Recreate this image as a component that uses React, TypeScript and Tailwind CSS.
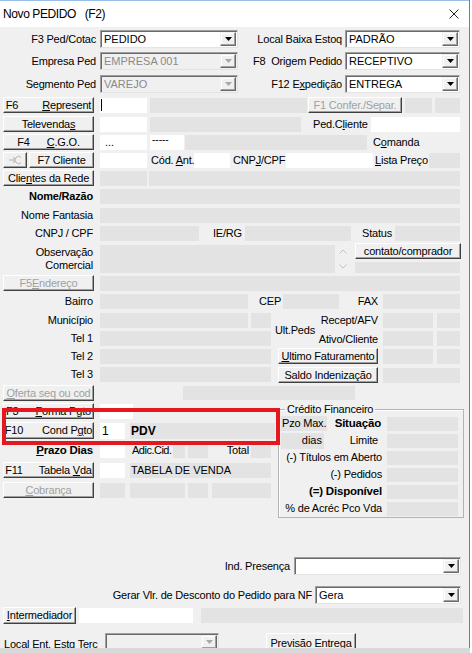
import type { ReactNode } from 'react';
import { clsx as cn } from 'clsx';

type P = { c?: string; children?: ReactNode };

function U({ children }: { children: ReactNode }) {
  return <span className="underline underline-offset-[1px] decoration-1">{children}</span>;
}

function Lbl({ c, children }: P) {
  return <div className={cn('shrink-0 whitespace-nowrap', c)}>{children}</div>;
}

function Fld({ c, white, children }: P & { white?: boolean }) {
  return (
    <div
      className={cn(
        'shrink-0 h-[15px] flex items-center overflow-hidden whitespace-nowrap tracking-normal',
        white ? 'bg-white' : 'bg-[#e3e3e3]',
        c
      )}
    >
      {children}
    </div>
  );
}

function Btn({ c, dis, children }: P & { dis?: boolean }) {
  return (
    <div
      className={cn(
        'shrink-0 h-[16px] flex items-center justify-center whitespace-nowrap bg-[#f0f0f0] border border-t-white border-l-white border-r-[#404040] border-b-[#404040] shadow-[inset_-1px_-1px_0_#a0a0a0]',
        dis ? 'text-[#a0a0a0]' : 'text-black',
        c
      )}
    >
      {children}
    </div>
  );
}

function Combo({ c, v, dis }: { c?: string; v?: string; dis?: boolean }) {
  return (
    <div
      className={cn(
        'shrink-0 h-[18px] flex border border-t-[#a0a0a0] border-l-[#a0a0a0] border-r-[#e3e3e3] border-b-[#e3e3e3] shadow-[inset_1px_1px_0_#696969]',
        dis ? 'bg-[#f0f0f0] text-[#8a8a8a]' : 'bg-white text-black',
        c
      )}
    >
      <div className="flex-1 pl-[3px] pt-[1px] flex items-center whitespace-nowrap overflow-hidden tracking-normal">{v}</div>
      <div className="w-[16px] h-[14px] mt-[1px] mr-[1px] flex items-center justify-center bg-[#f0f0f0] border border-t-[#f0f0f0] border-l-[#f0f0f0] border-r-[#696969] border-b-[#696969] shadow-[inset_-1px_-1px_0_#a0a0a0,inset_1px_1px_0_#fff]">
        <svg width="7" height="4" viewBox="0 0 7 4">
          <path d="M0 0h7L3.5 4z" fill={dis ? '#a8a8a8' : '#000'} />
        </svg>
      </div>
    </div>
  );
}

export default function App() {
  return (
    <div className="w-[472px] h-[653px] bg-white overflow-hidden font-['Liberation_Sans',Arial,sans-serif] text-[11px] leading-none tracking-[-0.2px] text-black">
      <div className="relative w-[470px] h-[648px] overflow-hidden bg-[#f0f0f0] border-r border-[#3b8ad6] flex flex-col">
        {/* title bar */}
        <div className="h-[27px] shrink-0 bg-white border-t border-[#9cc1e8] flex items-center">
          <span className="pl-[3px] text-[12px] tracking-[-0.4px] whitespace-pre">Novo PEDIDO   (F2)</span>
          <svg className="ml-auto mr-[10px]" width="10" height="10" viewBox="0 0 10 10">
            <path d="M0.5 0.5l9 9M9.5 0.5l-9 9" stroke="#222" strokeWidth="1" />
          </svg>
        </div>

        <div className="flex items-center h-[18px] mt-[3px] shrink-0">
          <Lbl c="w-[96px] text-right">F3 Ped/Cotac</Lbl>
          <Combo c="ml-[4px] w-[138px]" v="PEDIDO" />
          <Lbl c="w-[104px] text-right">Local Baixa Estoq</Lbl>
          <Combo c="ml-[3px] w-[115px]" v="PADRÃO" />
        </div>
        <div className="flex items-center h-[18px] mt-[4px] shrink-0">
          <Lbl c="w-[96px] text-right">Empresa Ped</Lbl>
          <Combo dis c="ml-[4px] w-[138px]" v="EMPRESA 001" />
          <Lbl c="w-[104px] text-right whitespace-pre">F8  Origem Pedido</Lbl>
          <Combo c="ml-[3px] w-[115px]" v="RECEPTIVO" />
        </div>
        <div className="flex items-center h-[18px] mt-[5px] shrink-0">
          <Lbl c="w-[96px] text-right">Segmento Ped</Lbl>
          <Combo dis c="ml-[4px] w-[138px]" v="VAREJO" />
          <Lbl c="w-[104px] text-right">
            F12 E<U>x</U>pedição
          </Lbl>
          <Combo c="ml-[3px] w-[115px]" v="ENTREGA" />
        </div>

        <div className="flex items-center h-[16px] mt-[4px] shrink-0">
          <Btn c="ml-[3px] w-[91px] gap-[24px]">
            <span>F6</span>
            <span>
              <U>R</U>epresent
            </span>
          </Btn>
          <Fld white c="ml-[6px] w-[47px]">
            <div className="ml-[1px] w-px h-[12px] bg-black" />
          </Fld>
          <Fld c="ml-[3px] w-[157px]" />
          <Btn dis c="ml-[1px] w-[94px]">F1 Confer./Separ.</Btn>
          <Fld c="ml-[3px] w-[27px]" />
          <Fld c="ml-[3px] w-[25px]" />
        </div>

        <div className="flex items-center h-[16px] mt-[3px] shrink-0">
          <Btn c="ml-[3px] w-[91px]">
            Televenda<U>s</U>
          </Btn>
          <Fld white c="ml-[6px] w-[47px]" />
          <Fld c="ml-[3px] w-[151px]" />
          <Lbl c="ml-[12px] w-[55px]">
            Ped.C<U>l</U>iente
          </Lbl>
          <Fld white c="ml-[3px] w-[89px]" />
        </div>

        <div className="flex items-center h-[16px] mt-[2px] shrink-0">
          <Btn c="ml-[3px] w-[91px] gap-[17px]">
            <span>F4</span>
            <span>
              <U>C</U>.G.O.
            </span>
          </Btn>
          <Fld white c="ml-[6px] w-[47px] pl-[5px]">...</Fld>
          <Fld white c="ml-[3px] w-[34px] !items-start pl-[2px]">
            <span className="leading-[9px] text-[10px]">-----</span>
          </Fld>
          <Fld c="ml-[1px] w-[182px]" />
          <Lbl c="ml-[6px]">
            C<U>o</U>manda
          </Lbl>
        </div>

        <div className="flex items-center h-[16px] mt-[2px] shrink-0">
          <Btn dis c="ml-[3px] w-[24px]">
            <svg width="15" height="10" viewBox="0 0 15 10" fill="none">
              <path d="M1 5h5M6 2v6" stroke="#b4b4b4" />
              <path d="M13 2.3A3.6 3.6 0 1 0 13 7.7" stroke="#b4b4b4" />
            </svg>
          </Btn>
          <Btn c="ml-[2px] w-[65px]">F7 Cliente</Btn>
          <Fld white c="ml-[6px] w-[47px]" />
          <Lbl c="ml-[4px] w-[43px]">
            Cód. <U>A</U>nt.
          </Lbl>
          <Fld white c="w-[36px]" />
          <Lbl c="ml-[3px] w-[53px]">
            CNP<U>J</U>/CPF
          </Lbl>
          <Fld white c="w-[87px]" />
          <Lbl c="ml-[2px] w-[54px]">
            <U>L</U>ista Preço
          </Lbl>
          <Fld c="w-[31px]" />
        </div>

        <div className="flex items-center h-[16px] mt-[2px] shrink-0">
          <Btn c="ml-[3px] w-[91px]">
            Clie<U>n</U>tes da Rede
          </Btn>
          <Fld c="ml-[6px] w-[47px]" />
          <Fld c="ml-[2px] w-[311px]" />
        </div>

        <div className="flex items-center h-[15px] mt-[3px] shrink-0">
          <Lbl c="w-[93px] text-right font-bold">Nome/Razão</Lbl>
          <Fld c="ml-[7px] w-[360px]" />
        </div>
        <div className="flex items-center h-[15px] mt-[4px] shrink-0">
          <Lbl c="w-[93px] text-right">Nome Fantasia</Lbl>
          <Fld c="ml-[7px] w-[360px]" />
        </div>
        <div className="flex items-center h-[15px] mt-[3px] shrink-0">
          <Lbl c="w-[93px] text-right">CNPJ / CPF</Lbl>
          <Fld c="ml-[7px] w-[99px]" />
          <Lbl c="ml-[14px] w-[31px]">IE/RG</Lbl>
          <Fld c="ml-[1px] w-[106px]" />
          <Lbl c="ml-[11px] w-[32px]">Status</Lbl>
          <Fld c="ml-[1px] w-[65px]" />
        </div>

        <div className="flex items-start h-[28px] mt-[4px] shrink-0">
          <Lbl c="w-[93px] text-right leading-[13px] pt-[1px]">
            Observação
            <br />
            Comercial
          </Lbl>
          <Fld c="ml-[7px] w-[235px] !h-[28px]" />
          <div className="ml-[4px] w-[8px] h-[28px] flex flex-col items-center justify-between py-[4px]">
            <svg width="8" height="5" viewBox="0 0 8 5" fill="none">
              <path d="M0.5 4.5L4 1l3.5 3.5" stroke="#c2c2c2" />
            </svg>
            <svg width="8" height="5" viewBox="0 0 8 5" fill="none">
              <path d="M0.5 0.5L4 4l3.5-3.5" stroke="#c2c2c2" />
            </svg>
          </div>
          <div className="ml-[8px] -mt-[2px] flex flex-col">
            <Btn c="w-[106px]">contato/comprador</Btn>
            <Fld c="mt-[3px] w-[105px] !h-[11px]" />
          </div>
        </div>

        <div className="flex items-center h-[16px] mt-[2px] shrink-0">
          <Btn dis c="ml-[3px] w-[91px]">
            F5<U>E</U>ndereço
          </Btn>
          <Fld c="ml-[6px] w-[360px]" />
        </div>

        <div className="flex items-center h-[15px] mt-[3px] shrink-0">
          <Lbl c="w-[93px] text-right">Bairro</Lbl>
          <Fld c="ml-[7px] w-[148px]" />
          <Lbl c="ml-[11px] w-[22px]">CEP</Lbl>
          <Fld c="ml-[2px] w-[56px]" />
          <Lbl c="w-[39px] text-right">FAX</Lbl>
          <Fld c="ml-[5px] w-[77px]" />
        </div>

        {/* Município / Tel block with Ult.Peds column */}
        <div className="flex items-start mt-[4px] shrink-0">
          <div className="w-[271px] flex flex-col">
            <div className="flex items-center h-[15px]">
              <Lbl c="w-[93px] text-right">Município</Lbl>
              <Fld c="ml-[7px] w-[148px]" />
              <Fld c="ml-[3px] w-[20px]" />
            </div>
            <div className="flex items-center h-[15px] mt-[3px]">
              <Lbl c="w-[93px] text-right">Tel 1</Lbl>
              <Fld c="ml-[7px] w-[171px]" />
            </div>
            <div className="flex items-center h-[15px] mt-[3px]">
              <Lbl c="w-[93px] text-right">Tel 2</Lbl>
              <Fld c="ml-[7px] w-[171px]" />
            </div>
            <div className="flex items-center h-[15px] mt-[3px]">
              <Lbl c="w-[93px] text-right">Tel 3</Lbl>
              <Fld c="ml-[7px] w-[171px]" />
            </div>
          </div>
          <div className="ml-[4px] flex flex-col">
            <div className="flex h-[33px]">
              <Lbl c="w-[40px] self-center pt-[2px]">Ult.Peds</Lbl>
              <div className="w-[63px] flex flex-col text-right">
                <div className="h-[15px] leading-[14px]">Recept/AFV</div>
                <div className="h-[15px] mt-[3px] leading-[16px]">Ativo/Cliente</div>
              </div>
              <div className="ml-[5px] flex flex-col">
                <div className="flex h-[15px]">
                  <Fld c="w-[50px]" />
                  <Fld c="ml-[4px] w-[23px]" />
                </div>
                <div className="flex h-[15px] mt-[3px]">
                  <Fld c="w-[50px]" />
                  <Fld c="ml-[4px] w-[23px]" />
                </div>
              </div>
            </div>
            <div className="flex items-center h-[16px] mt-[2px]">
              <Btn c="ml-[3px] w-[100px]">
                <U>U</U>ltimo Faturamento
              </Btn>
              <Fld c="ml-[5px] w-[50px]" />
              <Fld c="ml-[4px] w-[23px]" />
            </div>
            <div className="flex items-center h-[16px] mt-[3px]">
              <Btn c="ml-[3px] w-[100px]">Saldo Indenização</Btn>
              <Fld c="ml-[5px] w-[77px]" />
            </div>
          </div>
        </div>

        <div className="flex items-center h-[16px] mt-[2px] shrink-0">
          <Btn dis c="ml-[3px] w-[91px]">
            <U>O</U>ferta seq ou cod
          </Btn>
          <Fld c="ml-[89px] w-[172px] !h-[14px]" />
        </div>

        {/* pagamento + crédito financeiro */}
        <div className="flex items-start mt-[2px] shrink-0">
          <div className="w-[275px] flex flex-col">
            <div className="flex items-center h-[16px]">
              <Btn c="ml-[3px] w-[91px] gap-[17px]">
                <span>F3</span>
                <span>
                  <U>F</U>orma Pgto
                </span>
              </Btn>
              <Fld white c="ml-[6px] w-[33px]" />
            </div>
            <div className="flex items-center h-[17px] mt-[3px]">
              <Btn c="ml-[3px] w-[91px] !h-[17px] gap-[19px]">
                <span>F10</span>
                <span>
                  Cond P<U>g</U>to
                </span>
              </Btn>
              <Fld white c="ml-[6px] w-[25px] !h-[16px] pl-[2px] text-[12px]">
                1
              </Fld>
              <Fld c="ml-[5px] w-[145px] !h-[16px] pl-[1px] text-[12px] font-bold">PDV</Fld>
            </div>
            <div className="flex items-center h-[15px] mt-[4px]">
              <Lbl c="w-[93px] text-right font-bold text-[11.5px]">
                <U>P</U>razo Dias
              </Lbl>
              <Fld white c="ml-[7px] w-[25px]" />
              <Lbl c="ml-[7px] w-[41px] tracking-[-0.5px]">Adic.Cid.</Lbl>
              <Fld c="w-[12px]" />
              <Fld c="ml-[3px] w-[20px]" />
              <Lbl c="w-[41px] text-right">Total</Lbl>
              <Fld c="ml-[2px] w-[20px]" />
            </div>
            <div className="flex items-center h-[16px] mt-[4px]">
              <Btn c="ml-[3px] w-[91px] gap-[16px]">
                <span>F11</span>
                <span>
                  Tabela <U>V</U>da
                </span>
              </Btn>
              <Fld white c="ml-[6px] w-[25px]" />
              <Fld c="ml-[5px] w-[141px] pl-[1px]">TABELA DE VENDA</Fld>
            </div>
            <div className="flex items-center h-[16px] mt-[4px]">
              <Btn dis c="ml-[3px] w-[91px]">
                <U>C</U>obrança
              </Btn>
              <Fld c="ml-[6px] w-[25px]" />
              <Fld c="ml-[5px] w-[55px]" />
              <Fld c="ml-[3px] w-[20px]" />
              <Fld c="ml-[4px] w-[59px]" />
            </div>
          </div>

          <fieldset className="ml-[3px] w-[186px] border border-[#b4b4b4] shadow-[inset_1px_1px_0_#fff] px-[2px] pb-[1px]">
            <legend className="ml-[4px] px-[2px] leading-[12px]">Crédito Financeiro</legend>
            <div className="flex items-center h-[15px] mt-[1px]">
              <Fld c="w-[46px] pl-[1px] !tracking-[-0.2px]">Pzo Max.</Fld>
              <Lbl c="w-[54px] text-right font-bold text-[11.5px]">Situação</Lbl>
              <Fld c="ml-[6px] w-[71px] !h-[14px]" />
            </div>
            <div className="flex items-center h-[15px] mt-[2px]">
              <Fld c="w-[43px] justify-end pr-[2px] !h-[16px]">dias</Fld>
              <Lbl c="w-[54px] text-right">Limite</Lbl>
              <Fld c="ml-[9px] w-[71px] !h-[14px]" />
            </div>
            <div className="flex items-center h-[15px] mt-[2px]">
              <Lbl c="w-[101px] text-right">(-) Títulos em Aberto</Lbl>
              <Fld c="ml-[5px] w-[71px] !h-[14px]" />
            </div>
            <div className="flex items-center h-[15px] mt-[2px]">
              <Lbl c="w-[101px] text-right">(-) Pedidos</Lbl>
              <Fld c="ml-[5px] w-[71px] !h-[14px]" />
            </div>
            <div className="flex items-center h-[15px] mt-[2px]">
              <Lbl c="w-[101px] text-right font-bold text-[11.5px]">(=) Disponível</Lbl>
              <Fld c="ml-[5px] w-[71px] !h-[14px]" />
            </div>
            <div className="flex items-center h-[15px] mt-[2px]">
              <Lbl c="w-[101px] text-right">% de Acréc Pco Vda</Lbl>
              <Fld c="ml-[5px] w-[71px] !h-[14px]" />
            </div>
          </fieldset>
        </div>

        <div className="flex items-center h-[18px] mt-[39px] shrink-0">
          <Lbl c="w-[290px] text-right">Ind. Presença</Lbl>
          <Combo c="ml-[4px] w-[167px]" />
        </div>
        <div className="flex items-center h-[18px] mt-[11px] shrink-0">
          <Lbl c="w-[312px] text-right">Gerar Vlr. de Desconto do Pedido para NF</Lbl>
          <Combo c="ml-[3px] w-[146px]" v="Gera" />
        </div>
        <div className="flex items-center h-[17px] mt-[3px] shrink-0">
          <Btn c="ml-[3px] w-[73px] !h-[17px]">
            <U>I</U>ntermediador
          </Btn>
          <Fld white c="ml-[3px] w-[114px]" />
          <Fld c="ml-[8px] w-[262px]" />
        </div>
        <div className="flex items-start h-[18px] mt-[9px] shrink-0">
          <Lbl c="ml-[4px] w-[97px] pt-[6px]">Local Ent. Estq Terc</Lbl>
          <Combo dis c="ml-[4px] w-[114px]" />
          <Btn c="ml-[47px] w-[90px] !h-[17px] pt-[3px]">Previsão Entrega</Btn>
        </div>

        {/* annotation box */}
        <div className="absolute left-[2px] top-[408px] w-[278px] h-[37px] border-4 border-[#e5171f]" />
      </div>
      <div className="h-[5px] w-[470px] bg-[#d9d9d9]" />
    </div>
  );
}
